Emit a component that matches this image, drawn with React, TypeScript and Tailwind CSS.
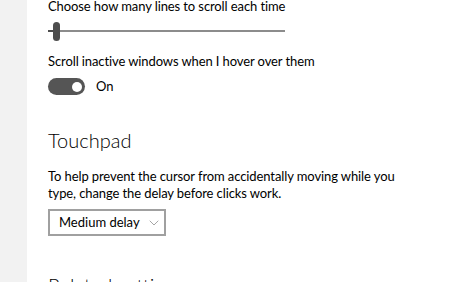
import { ChevronDown } from "lucide-react";

const font = { fontFamily: 'Lato, "Open Sans", "Noto Sans", sans-serif' };

export default function App() {
  return (
    <div className="flex h-[282px] w-[474px] overflow-hidden bg-white text-black" style={font}>
      <div className="w-[27px] shrink-0 bg-[#f2f2f2]" />
      <div className="flex flex-col pl-[21px]">
        <p className="-mt-[2px] text-[13px] leading-[17px] tracking-[-0.1px]">Choose how many lines to scroll each time</p>

        {/* slider */}
        <div className="relative mt-[7px] h-[19px] w-[237px] shrink-0">
          <div className="absolute left-0 right-0 top-[8px] h-[2px] bg-[#8c8c8c]" />
          <div className="absolute left-0 top-[8px] h-[2px] w-[6px] bg-[#4d4d4d]" />
          <div className="absolute left-[5px] top-0 h-[19px] w-[7px] rounded-full bg-[#4d4d4d]" />
        </div>

        <p className="mt-[12px] text-[13px] leading-[17px] tracking-[-0.1px]">Scroll inactive windows when I hover over them</p>

        <div className="mt-[8px] flex shrink-0 items-center gap-[11px]">
          <div className="flex h-[17px] w-[37px] items-center justify-end rounded-full bg-[#555555] pr-[3px]">
            <div className="h-[10px] w-[10px] rounded-full bg-white" />
          </div>
          <span className="text-[13px] leading-[17px]">On</span>
        </div>

        <h2 className="mt-[33px] text-[20px] font-light leading-[24px]">Touchpad</h2>

        <p className="mt-[16px] w-[358px] text-[13px] leading-[17px] tracking-[-0.1px]">
          To help prevent the cursor from accidentally moving while you type, change the delay before clicks work.
        </p>

        <button className="mt-[7px] flex h-[27px] w-[118px] shrink-0 items-center whitespace-nowrap border-2 border-[#a0a0a0] pl-[9px] text-[13px]">
          Medium delay
          <ChevronDown className="ml-[6px] h-[16px] w-[16px] text-[#777]" strokeWidth={1} />
        </button>

        <h3 className="mt-[37px] shrink-0 whitespace-nowrap text-[20px] font-light leading-[24px]">Related settings</h3>
      </div>
    </div>
  );
}
